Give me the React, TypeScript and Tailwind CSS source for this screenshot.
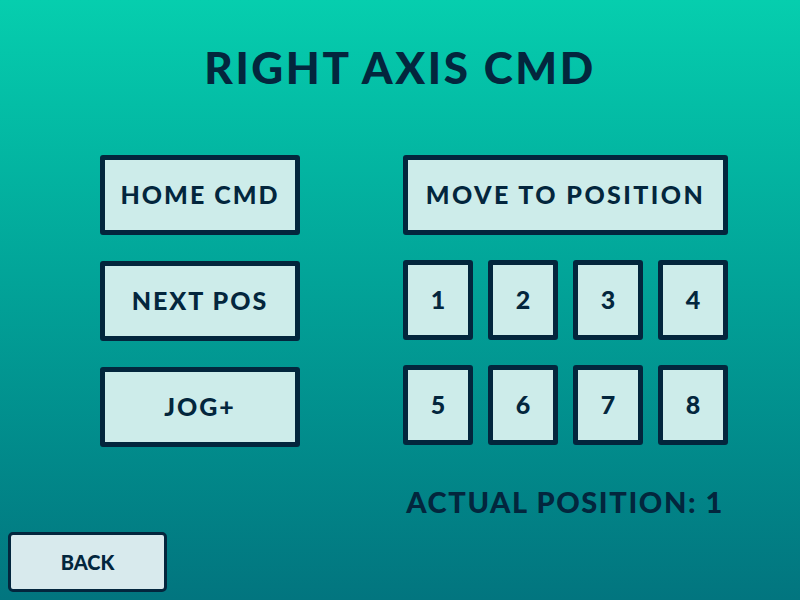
import React from "react";

const font = { fontFamily: '"Lato", "Noto Sans", sans-serif' };

function Btn({ children, className = "" }: { children: React.ReactNode; className?: string }) {
  return (
    <div
      className={`flex items-center justify-center border-[5px] border-[#03263d] rounded-[3px] bg-[#cdecea] text-[#03263d] font-black ${className}`}
    >
      {children}
    </div>
  );
}

export default function App() {
  return (
    <div
      className="w-[800px] h-[600px] flex flex-col bg-gradient-to-b from-[#06ceae] to-[#02757f] text-[#03263d] overflow-hidden"
      style={font}
    >
      <div className="h-[155px] flex justify-center pt-[40px]">
        <h1 className="text-[44px] leading-[54px] font-black tracking-[2.6px]">RIGHT AXIS CMD</h1>
      </div>
      <div className="flex pl-[100px] gap-[103px]">
        <div className="flex flex-col gap-[26px] w-[200px]">
          <Btn className="h-[80px] text-[25px] tracking-[2px]">HOME CMD</Btn>
          <Btn className="h-[80px] text-[25px] tracking-[2px]">NEXT POS</Btn>
          <Btn className="h-[80px] text-[25px] tracking-[2px]">JOG+</Btn>
        </div>
        <div className="flex flex-col gap-[25px] w-[325px]">
          <Btn className="h-[80px] text-[25px] tracking-[2.4px]">MOVE TO POSITION</Btn>
          <div className="grid grid-cols-4 gap-x-[15px] gap-y-[25px]">
            {[1, 2, 3, 4, 5, 6, 7, 8].map((n) => (
              <Btn key={n} className="h-[80px] text-[25px]">
                {n}
              </Btn>
            ))}
          </div>
        </div>
      </div>
      <div className="flex justify-end pr-[76px] mt-[37px]">
        <span className="text-[29px] font-black leading-[36px] tracking-[1.6px]">ACTUAL POSITION: 1</span>
      </div>
      <div className="pl-[8px] mt-[12px]">
        <div className="w-[159px] h-[60px] flex items-center justify-center border-[3px] border-[#03263d] rounded-[5px] bg-[#d8eaed] text-[20px] font-black">
          BACK
        </div>
      </div>
    </div>
  );
}
